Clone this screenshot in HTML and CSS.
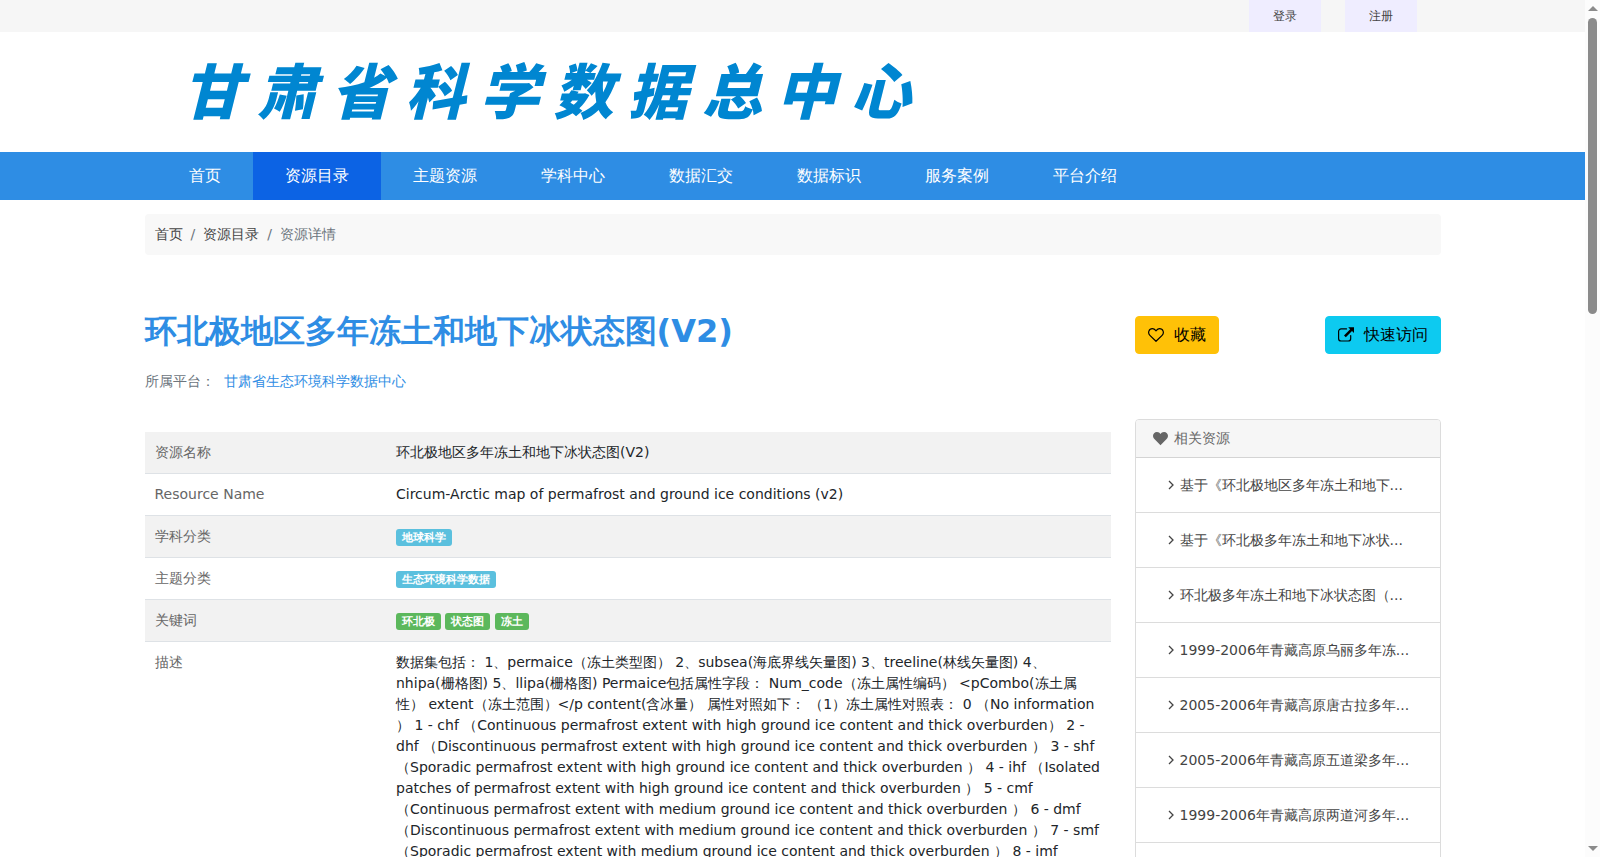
FILE: index.html
```html
<!DOCTYPE html>
<html lang="en">
<head>
<meta charset="utf-8">
<meta name="viewport" content="width=device-width, initial-scale=1">
<title>环北极地区多年冻土和地下冰状态图(V2)</title>
<link rel="stylesheet" href="styles.css">
</head>
<body>
<div class="viewport">
<div class="page">
  <div class="topbar">
    <div class="container topbar-inner">
      <a class="top-link" href="#">登录</a>
      <a class="top-link" href="#">注册</a>
    </div>
  </div>
  <header class="header">
    <div class="container header-inner">
      <a class="logo" href="#">甘肃省科学数据总中心</a>
    </div>
  </header>
  <nav class="nav">
    <div class="container nav-inner">
      <a class="nav-link" href="#">首页</a>
      <a class="nav-link active" href="#">资源目录</a>
      <a class="nav-link" href="#">主题资源</a>
      <a class="nav-link" href="#">学科中心</a>
      <a class="nav-link" href="#">数据汇交</a>
      <a class="nav-link" href="#">数据标识</a>
      <a class="nav-link" href="#">服务案例</a>
      <a class="nav-link" href="#">平台介绍</a>
    </div>
  </nav>
  <main class="container">
    <ol class="breadcrumb">
      <li><a href="#">首页</a></li>
      <li class="sep">/</li>
      <li><a href="#">资源目录</a></li>
      <li class="sep">/</li>
      <li class="current">资源详情</li>
    </ol>
    <div class="layout">
      <div class="heading">
        <h1 class="title">环北极地区多年冻土和地下冰状态图(V2)</h1>
        <p class="platform"><span>所属平台：</span><a href="#">甘肃省生态环境科学数据中心</a></p>
      </div>
      <div class="actions">
        <button class="btn btn-warning" type="button">
          <svg class="btn-icon" viewBox="0 0 16 16" aria-hidden="true"><path d="M8 14.3 1.9 8.4C-.6 5.900.9 1.700 4.400 1.700 6.300 1.700 7.300 3 8 3.800 8.700 3 9.700 1.700 11.600 1.700c3.500 0 5 4.200 2.500 6.700z" fill="none" stroke="currentColor" stroke-width="1.2" stroke-linejoin="round"/></svg>
          收藏
        </button>
        <button class="btn btn-info" type="button">
          <svg class="btn-icon" viewBox="0 0 16 16" aria-hidden="true"><path d="M8.500 1.900H3.200A2.600 2.600 0 0 0 .6 4.500v6.900A2.600 2.600 0 0 0 3.200 14h6.900a2.600 2.600 0 0 0 2.600-2.600V8.600" fill="none" stroke="currentColor" stroke-width="1.2" stroke-linecap="round"/><path d="M10.200.2H16V6l-2-2-6.200 6.200-1.800-1.800L12.200 2.200z" fill="currentColor"/></svg>
          快速访问
        </button>
      </div>
      <table class="info">
        <tbody>
          <tr><th scope="row">资源名称</th><td>环北极地区多年冻土和地下冰状态图(V2)</td></tr>
          <tr><th scope="row">Resource Name</th><td>Circum-Arctic map of permafrost and ground ice conditions (v2)</td></tr>
          <tr><th scope="row">学科分类</th><td><span class="badge blue">地球科学</span></td></tr>
          <tr><th scope="row">主题分类</th><td><span class="badge blue">生态环境科学数据</span></td></tr>
          <tr><th scope="row">关键词</th><td><span class="badge green">环北极</span> <span class="badge green">状态图</span> <span class="badge green">冻土</span></td></tr>
          <tr><th scope="row">描述</th><td>数据集包括： 1、permaice（冻土类型图） 2、subsea(海底界线矢量图) 3、treeline(林线矢量图) 4、nhipa(栅格图) 5、llipa(栅格图) Permaice包括属性字段： Num_code（冻土属性编码） &lt;pCombo(冻土属性） extent（冻土范围）&lt;/p content(含冰量） 属性对照如下： （1）冻土属性对照表： 0 （No information ） 1 - chf （Continuous permafrost extent with high ground ice content and thick overburden） 2 - dhf （Discontinuous permafrost extent with high ground ice content and thick overburden ） 3 - shf （Sporadic permafrost extent with high ground ice content and thick overburden ） 4 - ihf （Isolated patches of permafrost extent with high ground ice content and thick overburden ） 5 - cmf （Continuous permafrost extent with medium ground ice content and thick overburden ） 6 - dmf （Discontinuous permafrost extent with medium ground ice content and thick overburden ） 7 - smf （Sporadic permafrost extent with medium ground ice content and thick overburden ） 8 - imf</td></tr>
        </tbody>
      </table>
      <aside class="card">
        <h2 class="card-header">
          <svg class="heart" viewBox="0 0 14 14" aria-hidden="true"><path d="M7 13.200 1.300 7.500C-1.300 4.900.3.900 3.700.9 5.300.9 6.300 1.800 7 2.700 7.700 1.800 8.700.9 10.300.9c3.400 0 5 4 2.400 6.600z" fill="currentColor"/></svg>
          相关资源
        </h2>
        <ul class="related">
          <li><a href="#"><svg class="chevron" viewBox="0 0 6 10" aria-hidden="true"><path d="m1 1 4 4-4 4"/></svg>基于《环北极地区多年冻土和地下...</a></li>
          <li><a href="#"><svg class="chevron" viewBox="0 0 6 10" aria-hidden="true"><path d="m1 1 4 4-4 4"/></svg>基于《环北极多年冻土和地下冰状...</a></li>
          <li><a href="#"><svg class="chevron" viewBox="0 0 6 10" aria-hidden="true"><path d="m1 1 4 4-4 4"/></svg>环北极多年冻土和地下冰状态图（...</a></li>
          <li><a href="#"><svg class="chevron" viewBox="0 0 6 10" aria-hidden="true"><path d="m1 1 4 4-4 4"/></svg>1999-2006年青藏高原乌丽多年冻...</a></li>
          <li><a href="#"><svg class="chevron" viewBox="0 0 6 10" aria-hidden="true"><path d="m1 1 4 4-4 4"/></svg>2005-2006年青藏高原唐古拉多年...</a></li>
          <li><a href="#"><svg class="chevron" viewBox="0 0 6 10" aria-hidden="true"><path d="m1 1 4 4-4 4"/></svg>2005-2006年青藏高原五道梁多年...</a></li>
          <li><a href="#"><svg class="chevron" viewBox="0 0 6 10" aria-hidden="true"><path d="m1 1 4 4-4 4"/></svg>1999-2006年青藏高原两道河多年...</a></li>
          <li class="blank"></li>
        </ul>
      </aside>
    </div>
  </main>
</div>
<div class="scrollbar" aria-hidden="true">
  <svg class="arrow" viewBox="0 0 10 5"><path d="M5 0 10 5H0z"/></svg>
  <div class="track"><div class="thumb"></div></div>
  <svg class="arrow" viewBox="0 0 10 5"><path d="M0 0h10L5 5z"/></svg>
</div>
</div>
</body>
</html>
```

FILE: styles.css
```css
* { box-sizing: border-box; }

body {
  margin: 0;
  background: #fff;
  color: #212529;
  font-family: "DejaVu Sans";
  font-size: 14px;
  line-height: 21px;
}

a { color: #444; text-decoration: none; }

.viewport {
  display: grid;
  grid-template-columns: 1fr 15px;
  height: 100vh;
  overflow: hidden;
}

.page { min-width: 0; overflow: hidden; }

.container {
  max-width: 1320px;
  margin: 0 auto;
  padding: 0 12px;
}

.topbar { background: #f6f6f6; }

.topbar-inner {
  display: flex;
  justify-content: flex-end;
  gap: 24px;
  padding-right: 36px;
}

.top-link {
  padding: 0 24px;
  background: #efedff;
  font-size: 12px;
  line-height: 32px;
}

.header-inner {
  display: flex;
  align-items: center;
  height: 120px;
  padding: 0 12px 8px 50px;
}

.logo {
  width: 728px;
  color: #0086d1;
  font-family: "Noto Sans CJK SC", sans-serif;
  font-size: 60px;
  font-style: italic;
  font-weight: 900;
  line-height: 80px;
  text-align-last: justify;
  text-justify: inter-character;
  white-space: nowrap;
}

.nav { background: #2e8de4; }

.nav-inner { display: flex; padding: 0 24px; }

.nav-link {
  padding: 0 32px;
  color: #fff;
  font-size: 16px;
  line-height: 48px;
}

.nav-link.active { background: #0c63e4; }

.breadcrumb {
  display: flex;
  gap: 8px;
  margin: 14px 0 56px;
  padding: 10px;
  border-radius: 4px;
  background: #f8f8f8;
  list-style: none;
}

.breadcrumb .sep,
.breadcrumb .current { color: #6c757d; }

.layout {
  display: grid;
  grid-template-columns: 966fr 306fr;
  column-gap: 24px;
  align-items: start;
}

.title {
  margin: 0;
  color: #2e8de4;
  font-size: 32px;
  font-weight: 700;
  line-height: 40px;
}

.platform {
  display: flex;
  gap: 9px;
  margin: 20px 0 40px;
  color: #6c757d;
}

.platform a { color: #2e8de4; }

.actions {
  display: flex;
  justify-content: space-between;
  padding-top: 5px;
}

.btn {
  display: flex;
  align-items: center;
  gap: 10px;
  padding: 6px 12px;
  border: 1px solid transparent;
  border-radius: 4px;
  color: #000;
  font-family: inherit;
  font-size: 16px;
  line-height: 24px;
}

.btn-warning { background-color: #ffc107; border-color: #ffc107; }
.btn-info { background-color: #0dcaf0; border-color: #0dcaf0; }

.btn-icon { width: 16px; height: 16px; }

.info {
  width: 100%;
  border-collapse: collapse;
  table-layout: fixed;
}

.info th,
.info td {
  padding: 10px;
  border-bottom: 1px solid #dee2e6;
  text-align: left;
  vertical-align: top;
}

.info th { width: 25%; color: #666; font-weight: 400; }

.info tr:nth-child(odd) { background: #f2f2f2; }

.badge {
  display: inline-block;
  padding: 0 6px;
  border-radius: 3px;
  color: #fff;
  font-size: 11px;
  font-weight: 700;
  line-height: 17px;
}

.blue { background: #5bc0de; }
.green { background: #5cb85c; }

.card {
  margin-top: -13px;
  border: 1px solid #dcdcdc;
  border-radius: 4px;
  overflow: hidden;
}

.card-header {
  display: flex;
  align-items: center;
  gap: 6px;
  margin: 0;
  padding: 8px 17px;
  border-bottom: 1px solid #d4d4d4;
  background: #f6f6f6;
  color: #666;
  font-size: 14px;
  font-weight: 400;
}

.heart { width: 15px; height: 15px; }

.related { margin: 0; padding: 0; list-style: none; }

.related li { height: 55px; border-bottom: 1px solid #dcdcdc; }

.related a {
  display: flex;
  align-items: center;
  gap: 6px;
  padding-left: 32px;
  line-height: 54px;
  white-space: nowrap;
}

.chevron {
  width: 6px;
  height: 10px;
  fill: none;
  stroke: currentColor;
  stroke-width: 1.3;
}

.scrollbar {
  display: flex;
  flex-direction: column;
  align-items: center;
  gap: 7px;
  padding: 6px 0;
  background: #fcfcfc;
}

.arrow { width: 10px; height: 5px; fill: #8b8b8b; }

.track { flex: 1; width: 9px; }

.thumb { height: 36%; border-radius: 5px; background: #8b8b8b; }
```
